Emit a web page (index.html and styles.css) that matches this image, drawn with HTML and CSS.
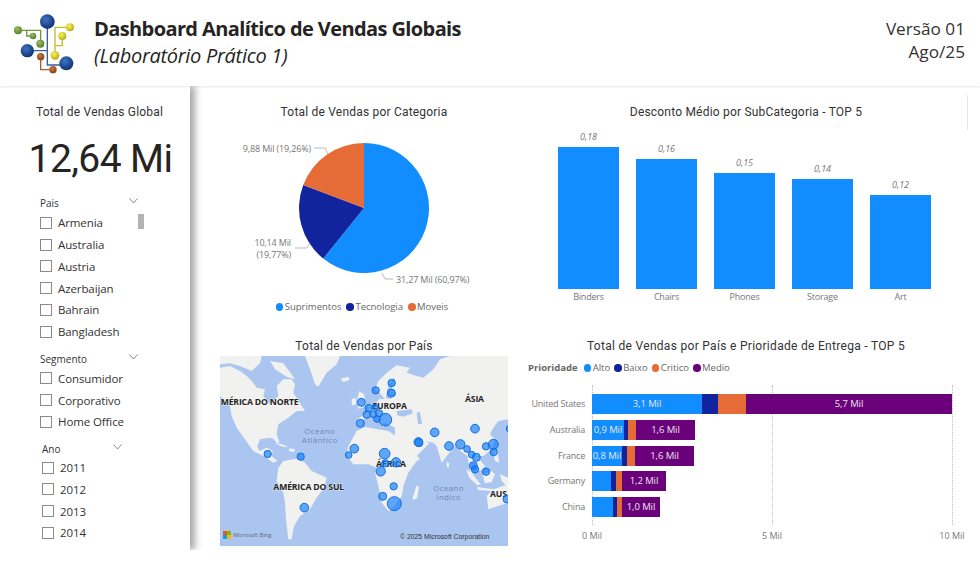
FILE: index.html
```html
<!DOCTYPE html>
<html>
  <head>
    <title>Dashboard Analítico de Vendas Globais</title>
    <link rel="stylesheet" href="styles.css">
  </head>
  <body>
    <div class="header">
      <svg class="logo" viewBox="0 0 270 225">
        <defs>
          <radialGradient id="blue" cx="40%" cy="35%" r="70%"><stop offset="0" stop-color="#3f74c4"/><stop offset="1" stop-color="#0b2f6e"/></radialGradient>
          <radialGradient id="green" cx="40%" cy="35%" r="70%"><stop offset="0" stop-color="#9cc05a"/><stop offset="1" stop-color="#4c7a2a"/></radialGradient>
          <radialGradient id="yellow" cx="40%" cy="35%" r="70%"><stop offset="0" stop-color="#fff35a"/><stop offset="1" stop-color="#b3aa10"/></radialGradient>
          <radialGradient id="brown" cx="40%" cy="35%" r="70%"><stop offset="0" stop-color="#c9793a"/><stop offset="1" stop-color="#7e3f12"/></radialGradient>
        </defs>
        <g fill="none" stroke-width="4">
          <path stroke="#6f9a3f" d="M54 76H122V116M80 76V93H99"/>
          <path stroke="#c4bd2c" d="M165 151V67H210M165 122H187V93"/>
          <path stroke="#3a5f9e" d="M142 50V180H199M82 137H142"/>
          <path stroke="#a8602a" d="M122 155V194H159"/>
        </g>
        <circle cx="142" cy="50" r="22" fill="url(#blue)"/>
        <circle cx="82" cy="137" r="20" fill="url(#blue)"/>
        <circle cx="199" cy="175" r="21" fill="url(#blue)"/>
        <circle cx="54" cy="76" r="12" fill="url(#green)"/>
        <circle cx="99" cy="93" r="10" fill="url(#green)"/>
        <circle cx="121" cy="116" r="12" fill="url(#green)"/>
        <circle cx="210" cy="67" r="12" fill="url(#yellow)"/>
        <circle cx="187" cy="93" r="12" fill="url(#yellow)"/>
        <circle cx="165" cy="151" r="13" fill="url(#yellow)"/>
        <circle cx="122" cy="155" r="11" fill="url(#brown)"/>
        <circle cx="159" cy="194" r="11" fill="url(#brown)"/>
      </svg>
      <div class="heading">
        <p class="title">Dashboard Analítico de Vendas Globais</p>
        <p class="subtitle">(Laboratório Prático 1)</p>
      </div>
      <div class="version">
        <p>Versão 01</p>
        <p>Ago/25</p>
      </div>
    </div>

    <div class="content">
      <div class="sidebar">
        <p class="din-title side-title">Total de Vendas Global</p>
        <p class="kpi">12,64 Mi</p>

        <div class="slicer">
          <div class="slicer-head">Pais
            <svg class="chevron" viewBox="0 0 9 6"><path d="M.5 .5 4.5 5 8.500 .5"/></svg>
          </div>
          <span class="scroll-thumb"></span>
          <div class="check"><span class="box"></span>Armenia</div>
          <div class="check"><span class="box"></span>Australia</div>
          <div class="check"><span class="box"></span>Austria</div>
          <div class="check"><span class="box"></span>Azerbaijan</div>
          <div class="check"><span class="box"></span>Bahrain</div>
          <div class="check"><span class="box"></span>Bangladesh</div>
        </div>

        <div class="slicer slicer-seg">
          <div class="slicer-head">Segmento
            <svg class="chevron" viewBox="0 0 9 6"><path d="M.5 .5 4.5 5 8.500 .5"/></svg>
          </div>
          <div class="check"><span class="box"></span>Consumidor</div>
          <div class="check"><span class="box"></span>Corporativo</div>
          <div class="check"><span class="box"></span>Home Office</div>
        </div>

        <div class="slicer slicer-ano">
          <div class="slicer-head">Ano
            <svg class="chevron" viewBox="0 0 9 6"><path d="M.5 .5 4.5 5 8.500 .5"/></svg>
          </div>
          <div class="check"><span class="box"></span>2011</div>
          <div class="check"><span class="box"></span>2012</div>
          <div class="check"><span class="box"></span>2013</div>
          <div class="check"><span class="box"></span>2014</div>
        </div>
      </div>

      <div class="main">
        <!-- pizza -->
        <div class="panel">
          <p class="din-title">Total de Vendas por Categoria</p>
          <svg class="pie" viewBox="220 125 288 170">
            <path fill="#118dff" d="M364 208V143A65 65 0 1 1 323.200 258.600Z"/>
            <path fill="#12239e" d="M364 208 323.200 258.600A65 65 0 0 1 303.200 185.100Z"/>
            <path fill="#e66c37" d="M364 208 303.200 185.100A65 65 0 0 1 364 143Z"/>
            <g class="leader">
              <path d="M314 148H325L328 154"/>
              <path d="M295 248H307L310 243"/>
              <path d="M382 273 385 279H393"/>
            </g>
            <g class="pie-label">
              <text x="311" y="152" text-anchor="end">9,88 Mil (19,26%)</text>
              <text x="291" y="246" text-anchor="end">10,14 Mil</text>
              <text x="291" y="258" text-anchor="end">(19,77%)</text>
              <text x="396" y="283">31,27 Mil (60,97%)</text>
            </g>
          </svg>
          <div class="legend legend-pie">
            <span class="key"><i class="dot c-blue"></i>Suprimentos</span>
            <span class="key"><i class="dot c-navy"></i>Tecnologia</span>
            <span class="key"><i class="dot c-orange"></i>Moveis</span>
          </div>
        </div>

        <!-- colunas -->
        <div class="panel">
          <p class="din-title">Desconto Médio por SubCategoria - TOP 5</p>
          <div class="columns">
            <div class="col"><span class="col-val">0,18</span><div class="col-bar" style="height:142px"></div><span class="col-name">Binders</span></div>
            <div class="col"><span class="col-val">0,16</span><div class="col-bar" style="height:130px"></div><span class="col-name">Chairs</span></div>
            <div class="col"><span class="col-val">0,15</span><div class="col-bar" style="height:116px"></div><span class="col-name">Phones</span></div>
            <div class="col"><span class="col-val">0,14</span><div class="col-bar" style="height:110px"></div><span class="col-name">Storage</span></div>
            <div class="col"><span class="col-val">0,12</span><div class="col-bar" style="height:94px"></div><span class="col-name">Art</span></div>
          </div>
        </div>

        <!-- mapa -->
        <div class="panel panel-low">
          <p class="din-title">Total de Vendas por País</p>
          <svg class="map" viewBox="0 0 864 570">
            <rect width="864" height="570" fill="#aac6f0"/>
            <g class="land">
              <path d="M0 35 30 30 60 45 80 60 95 75 110 95 135 100 130 120 150 145 175 120 170 90 190 70 215 70 225 85 220 110 245 150 255 165 230 165 205 185 175 205 170 235 178 258 172 262 160 248 150 245 120 250 112 270 118 285 140 275 158 285 155 300 172 315 160 320 130 300 100 285 75 250 50 215 35 180 30 150 0 120Z"/>
              <path d="M0 0H125L120 22 95 45 60 30 30 22 0 25Z"/>
              <path d="M150 15 190 22 225 70 200 62 165 40Z"/>
              <path d="M255 0H360L350 25 320 50 295 92 285 85 270 40Z"/>
              <path d="M362 68 385 62 388 72 370 78Z"/>
              <path d="M165 262 185 264 205 274 188 272Z"/>
              <path d="M207 277 225 280 222 288 208 286Z"/>
              <path d="M175 335 190 315 230 308 255 320 275 345 320 365 312 395 290 425 270 460 240 480 222 510 215 550 205 550 198 490 195 440 190 410 170 375Z"/>
              <path d="M410 225 435 213 465 218 505 225 535 245 565 248 575 280 600 310 590 315 565 350 552 385 545 420 515 460 505 465 485 440 475 390 465 350 470 335 445 325 400 325 380 300 385 270Z"/>
              <path d="M578 425 590 388 597 392 592 425 580 432Z"/>
              <path d="M465 100 475 75 500 50 530 28 570 35 560 50 590 60 610 65 640 40 660 10 690 0H864V190L835 195 820 215 810 235 825 250 815 280 790 300 770 300 795 330 785 342 772 345 765 320 752 322 758 355 768 372 750 345 742 300 722 285 705 270 680 300 665 320 650 270 640 260 610 255 590 240 572 225 600 250 628 262 590 300 555 305 535 250 525 240 525 215 505 205 490 200 492 215 470 180 455 180 430 190 425 215 410 210 412 190 430 178 445 165 445 150 470 140 478 128 495 130 480 112Z"/>
              <path d="M410 135 418 105 432 115 440 150 415 158Z"/>
              <path d="M395 130 407 125 408 145 396 148Z"/>
              <path d="M680 318 688 322 686 335 680 332Z"/>
              <path d="M738 340 755 350 782 385 772 388 748 365Z"/>
              <path d="M788 355 815 345 825 355 815 378 795 382Z"/>
              <path d="M770 393 820 400 820 406 775 402Z"/>
              <path d="M820 285 832 282 838 320 825 315Z"/>
              <path d="M840 355 864 365V395L845 375Z"/>
              <path d="M800 420 820 400 864 385V440L835 450 805 460Z"/>
            </g>
            <g class="water">
              <path d="M497 125 505 90 520 65 525 72 515 100 530 115 510 130Z"/>
              <path d="M530 165 575 160 578 172 550 182 532 178Z"/>
              <path d="M590 170 600 168 606 205 594 204Z"/>
            </g>
            <g class="map-region">
              <text x="2" y="147">MÉRICA DO NORTE</text>
              <text x="160" y="403">AMÉRICA DO SUL</text>
              <text x="457" y="160">EUROPA</text>
              <text x="735" y="137">ÁSIA</text>
              <text x="468" y="332">ÁFRICA</text>
              <text x="810" y="422">AUS</text>
            </g>
            <g class="map-ocean">
              <text x="299" y="234">Oceano</text>
              <text x="299" y="262">Atlântico</text>
              <text x="686" y="405">Oceano</text>
              <text x="686" y="433">Índico</text>
            </g>
            <g class="bubble" transform="translate(-15 -63)">
              <circle cx="530" cy="144" r="11"/><circle cx="482" cy="166" r="11"/><circle cx="529" cy="174" r="12"/>
              <circle cx="439" cy="202" r="12"/><circle cx="461" cy="219" r="11"/><circle cx="480" cy="217" r="9"/>
              <circle cx="455" cy="239" r="11"/><circle cx="475" cy="238" r="10"/><circle cx="492" cy="235" r="11"/>
              <circle cx="486" cy="252" r="10"/><circle cx="511" cy="254" r="19"/><circle cx="436" cy="265" r="12"/>
              <circle cx="659" cy="292" r="13"/><circle cx="780" cy="281" r="13"/><circle cx="884" cy="281" r="10"/>
              <circle cx="610" cy="321" r="13"/><circle cx="612" cy="323" r="12"/><circle cx="418" cy="341" r="13"/>
              <circle cx="401" cy="360" r="10"/><circle cx="158" cy="357" r="11"/><circle cx="257" cy="365" r="11"/>
              <circle cx="509" cy="356" r="16"/><circle cx="511" cy="385" r="11"/><circle cx="543" cy="382" r="14"/>
              <circle cx="497" cy="409" r="14"/><circle cx="536" cy="454" r="11"/><circle cx="503" cy="484" r="12"/>
              <circle cx="538" cy="506" r="21"/><circle cx="268" cy="518" r="13"/><circle cx="702" cy="333" r="13"/>
              <circle cx="736" cy="328" r="14"/><circle cx="756" cy="342" r="10"/><circle cx="770" cy="359" r="10"/>
              <circle cx="784" cy="367" r="12"/><circle cx="775" cy="392" r="12"/><circle cx="780" cy="403" r="11"/>
              <circle cx="813" cy="410" r="11"/><circle cx="813" cy="334" r="11"/><circle cx="835" cy="328" r="15"/>
              <circle cx="836" cy="351" r="11"/><circle cx="876" cy="492" r="12"/>
            </g>
            <rect x="9" y="525" width="12" height="12" fill="#f25022"/>
            <rect x="21" y="525" width="12" height="12" fill="#7fba00"/>
            <rect x="9" y="537" width="12" height="12" fill="#00a4ef"/>
            <rect x="21" y="537" width="12" height="12" fill="#ffb900"/>
            <text class="map-bing" x="40" y="544">Microsoft Bing</text>
            <text class="map-copy" x="540" y="548">© 2025 Microsoft Corporation</text>
          </svg>
        </div>

        <!-- barras empilhadas -->
        <div class="panel panel-low">
          <p class="din-title stack-title">Total de Vendas por País e Prioridade de Entrega - TOP 5</p>
          <div class="legend legend-stack">
            <b class="legend-name">Prioridade</b>
            <span class="key"><i class="dot c-blue"></i>Alto</span>
            <span class="key"><i class="dot c-navy"></i>Baixo</span>
            <span class="key"><i class="dot c-orange"></i>Critico</span>
            <span class="key"><i class="dot c-purple"></i>Medio</span>
          </div>
          <div class="stack">
            <span class="grid-line grid-0"></span>
            <span class="grid-line grid-5"></span>
            <span class="grid-line grid-10"></span>
            <div class="stack-row">
              <span class="stack-name">United States</span>
              <div class="seg c-blue" style="width:110px">3,1 Mil</div><div class="seg c-navy" style="width:16px"></div><div class="seg c-orange" style="width:28px"></div><div class="seg c-purple" style="width:206px">5,7 Mil</div>
            </div>
            <div class="stack-row">
              <span class="stack-name">Australia</span>
              <div class="seg c-blue" style="width:32px">0,9 Mil</div><div class="seg c-navy" style="width:4px"></div><div class="seg c-orange" style="width:8px"></div><div class="seg c-purple" style="width:59px">1,6 Mil</div>
            </div>
            <div class="stack-row">
              <span class="stack-name">France</span>
              <div class="seg c-blue" style="width:30px">0,8 Mil</div><div class="seg c-navy" style="width:5px"></div><div class="seg c-orange" style="width:8px"></div><div class="seg c-purple" style="width:59px">1,6 Mil</div>
            </div>
            <div class="stack-row">
              <span class="stack-name">Germany</span>
              <div class="seg c-blue" style="width:19px"></div><div class="seg c-navy" style="width:5px"></div><div class="seg c-orange" style="width:6px"></div><div class="seg c-purple" style="width:44px">1,2 Mil</div>
            </div>
            <div class="stack-row">
              <span class="stack-name">China</span>
              <div class="seg c-blue" style="width:21px"></div><div class="seg c-navy" style="width:4px"></div><div class="seg c-orange" style="width:5px"></div><div class="seg c-purple" style="width:38px">1,0 Mil</div>
            </div>
          </div>
          <div class="axis">
            <span class="tick">0 Mil</span>
            <span class="tick">5 Mil</span>
            <span class="tick">10 Mil</span>
          </div>
        </div>
      </div>
    </div>

    <span class="edge-mark"></span>
  </body>
</html>
```

FILE: styles.css
```css
body{
  margin: 0;
  color: #252423;
  background-color: white;
  font-family: "Open Sans", "Noto Sans", sans-serif;
}

p{
  margin: 0;
}

.header{
  display: flex;
  height: 86px;
  box-shadow: 0 1px 2px rgba(0,0,0,0.1);
}

.logo{
  width: 90px;
  height: 75px;
  margin-top: 5px;
  flex: none;
}

.heading{
  margin-left: 4px;
  padding-top: 15px;
}

.title{
  font-size: 20px;
  line-height: 27px;
  font-weight: 700;
  letter-spacing: -0.6px;
}

.subtitle{
  font-size: 20px;
  line-height: 28px;
  font-style: italic;
  letter-spacing: -0.3px;
}

.version{
  margin-left: auto;
  margin-right: 15px;
  padding-top: 17px;
  text-align: right;
  font-size: 17.200px;
  line-height: 23px;
  color: #333;
}

.content{
  display: flex;
  height: 464px;
}

.sidebar{
  width: 190px;
  flex: none;
  box-shadow: 5px 0 7px rgba(0,0,0,0.35);
  clip-path: inset(0 -20px 0 0);
  padding-top: 18px;
  box-sizing: border-box;
}

.din-title{
  font-family: Roboto, sans-serif;
  font-size: 12px;
  line-height: 16px;
  letter-spacing: 0.2px;
  text-align: center;
  color: #333;
}

.side-title{
  padding-left: 9px;
}

.stack-title{
  letter-spacing: 0.3px;
}

.kpi{
  font-family: Roboto, sans-serif;
  font-size: 39px;
  line-height: 46px;
  margin-top: 16px;
  padding-left: 11px;
  text-align: center;
  letter-spacing: -0.6px;
}

.slicer{
  position: relative;
  width: 98px;
  margin: 14px 0 0 40px;
  font-size: 11.500px;
  letter-spacing: -0.1px;
}

.slicer-head{
  display: flex;
  justify-content: space-between;
  align-items: flex-start;
  font-size: 10px;
  line-height: 14px;
  letter-spacing: 0;
  color: #333;
  margin-bottom: 2px;
}

.chevron{
  width: 9px;
  height: 6px;
  margin-top: 2px;
  fill: none;
  stroke: #888;
}

.slicer-seg{
  margin-top: 9px;
}

.slicer-ano{
  width: 80px;
  margin: 9px 0 0 42px;
}

.slicer-ano .slicer-head{
  margin-bottom: 1px;
}

.scroll-thumb{
  position: absolute;
  left: 98px;
  top: 18px;
  width: 6px;
  height: 15px;
  background-color: #b3b3b3;
}

.check{
  display: flex;
  align-items: center;
  height: 21.750px;
  color: #333;
  white-space: nowrap;
}

.box{
  width: 10px;
  height: 10px;
  border: 1px solid #8a8a8a;
  margin-right: 6px;
  flex: none;
}

.main{
  display: grid;
  grid-template-columns: 288px 444px;
  grid-template-rows: 251px 213px;
  column-gap: 16px;
  padding-left: 30px;
}

.panel{
  padding-top: 18px;
}

.panel-low{
  padding-top: 1px;
}

.pie{
  display: block;
  width: 288px;
  height: 170px;
  margin-top: 5px;
}

.leader path{
  fill: none;
  stroke: #bbb;
}

.pie-label text{
  font-size: 9px;
  letter-spacing: -0.15px;
  fill: #777;
}

.legend{
  display: flex;
  align-items: center;
  font-size: 9.500px;
  line-height: 14px;
  color: #666;
}

.legend-pie{
  justify-content: center;
  gap: 5px;
  margin-top: 5px;
  padding-right: 4px;
}

.legend-stack{
  gap: 4px;
  margin: 7px 0 0 4px;
}

.legend-name{
  margin-right: 2px;
}

.key{
  display: flex;
  align-items: center;
}

.dot{
  width: 7.500px;
  height: 7.500px;
  border-radius: 50%;
  margin-right: 1.500px;
  flex: none;
}

.c-blue{
  background-color: #118dff;
}

.c-navy{
  background-color: #12239e;
}

.c-orange{
  background-color: #e66c37;
}

.c-purple{
  background-color: #6b007b;
}

.columns{
  display: flex;
  gap: 17px;
  height: 184px;
  padding-left: 34px;
}

.col{
  display: flex;
  flex-direction: column;
  justify-content: flex-end;
  align-items: center;
  width: 61px;
}

.col-bar{
  width: 61px;
  background-color: #118dff;
}

.col-val{
  font-size: 9px;
  line-height: 12px;
  font-style: italic;
  color: #777;
  margin-bottom: 4px;
}

.col-name{
  font-size: 9px;
  line-height: 14px;
  letter-spacing: -0.2px;
  margin-top: 1px;
  color: #777;
}

.map{
  display: block;
  width: 288px;
  height: 190px;
  margin-top: 2px;
}

.land{
  filter: blur(1px);
}

.land path{
  fill: #f1f1ef;
}

.water path{
  fill: #aac6f0;
}

.map-region text{
  font-size: 26px;
  font-weight: 700;
  fill: #222;
  stroke: #fff;
  stroke-width: 3px;
  stroke-opacity: 0.6;
  paint-order: stroke;
  letter-spacing: -0.5px;
}

.map-ocean text{
  font-size: 24px;
  fill: #6d88b8;
  text-anchor: middle;
  letter-spacing: 1px;
}

.bubble circle{
  fill: rgba(17,125,250,0.65);
  stroke: #0f6fe0;
  stroke-width: 3px;
}

.map-bing{
  font-size: 17px;
  fill: #666;
}

.map-copy{
  font-family: "Liberation Sans", sans-serif;
  font-size: 20.500px;
  fill: #333;
}

.stack{
  position: relative;
  display: flex;
  flex-direction: column;
  gap: 5.750px;
  margin-top: 10px;
  padding: 9px 0 8px;
}

.grid-line{
  position: absolute;
  top: 0;
  bottom: 0;
  border-left: 1px dotted #bbb;
  z-index: -1;
}

.grid-0{
  left: 68px;
}

.grid-5{
  left: 248px;
}

.grid-10{
  left: 428px;
}

.stack-row{
  display: flex;
  height: 20px;
}

.stack-name{
  width: 61px;
  margin-right: 7px;
  flex: none;
  font-size: 9px;
  letter-spacing: -0.2px;
  line-height: 20px;
  text-align: right;
  color: #777;
  white-space: nowrap;
}

.seg{
  flex: none;
  font-size: 9.500px;
  letter-spacing: -0.1px;
  line-height: 20px;
  text-align: center;
  color: #e8e8e8;
  white-space: nowrap;
}

.axis{
  display: flex;
  justify-content: space-between;
  width: 360px;
  margin: 4px 0 0 68px;
}

.tick{
  width: 0;
  display: flex;
  justify-content: center;
  font-size: 9px;
  line-height: 14px;
  color: #777;
  white-space: nowrap;
}

.edge-mark{
  position: absolute;
  left: 967px;
  top: 95px;
  width: 1px;
  height: 35px;
  background-color: #e6e6e6;
}
```
